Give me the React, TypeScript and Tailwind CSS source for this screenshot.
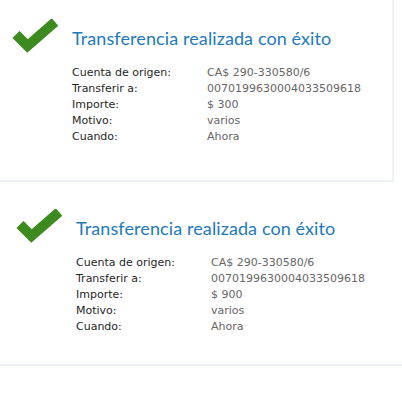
import React from "react";

type Row = { label: string; value: string };

function Check() {
  return (
    <svg width="47" height="34" viewBox="0 0 47 34" className="block shrink-0 -mt-[1px]">
      <polyline
        points="4,15.5 15.5,27 43,3"
        fill="none"
        stroke="#3d8a1f"
        strokeWidth="10"
        strokeLinejoin="miter"
        strokeLinecap="butt"
      />
    </svg>
  );
}

function Card({ rows, className }: { rows: Row[]; className: string }) {
  return (
    <div className={className}>
      <div className="flex items-start">
        <div className="w-[60px] shrink-0">
          <Check />
        </div>
        <div className="flex flex-col">
          <div className="text-[18px] leading-[22px] text-[#1f79bd] mt-[7px] tracking-[0.1px] font-['Lato',sans-serif]">
            Transferencia realizada con éxito
          </div>
          <div className="mt-[16px] flex flex-col font-['DejaVu_Sans',sans-serif] text-[11px] leading-[16px]">
            {rows.map((r) => (
              <div key={r.label} className="flex">
                <div className="w-[135px] shrink-0 text-[#1f1f1f]">{r.label}</div>
                <div className="text-[#666666]">{r.value}</div>
              </div>
            ))}
          </div>
        </div>
      </div>
    </div>
  );
}

export default function App() {
  const base = (amount: string): Row[] => [
    { label: "Cuenta de origen:", value: "CA$ 290-330580/6" },
    { label: "Transferir a:", value: "0070199630004033509618" },
    { label: "Importe:", value: amount },
    { label: "Motivo:", value: "varios" },
    { label: "Cuando:", value: "Ahora" },
  ];
  return (
    <div className="w-[402px] h-[402px] bg-white overflow-hidden">
      <Card
        rows={base("$ 300")}
        className="w-[394px] h-[182px] pt-[20px] pl-[12px] border-r-2 border-b-2 border-[#edf0f4]"
      />
      <Card
        rows={base("$ 900")}
        className="w-[402px] h-[176px] mt-[8px] pt-[20px] pl-[16px] border-b-2 border-[#edf0f4]"
      />
    </div>
  );
}
